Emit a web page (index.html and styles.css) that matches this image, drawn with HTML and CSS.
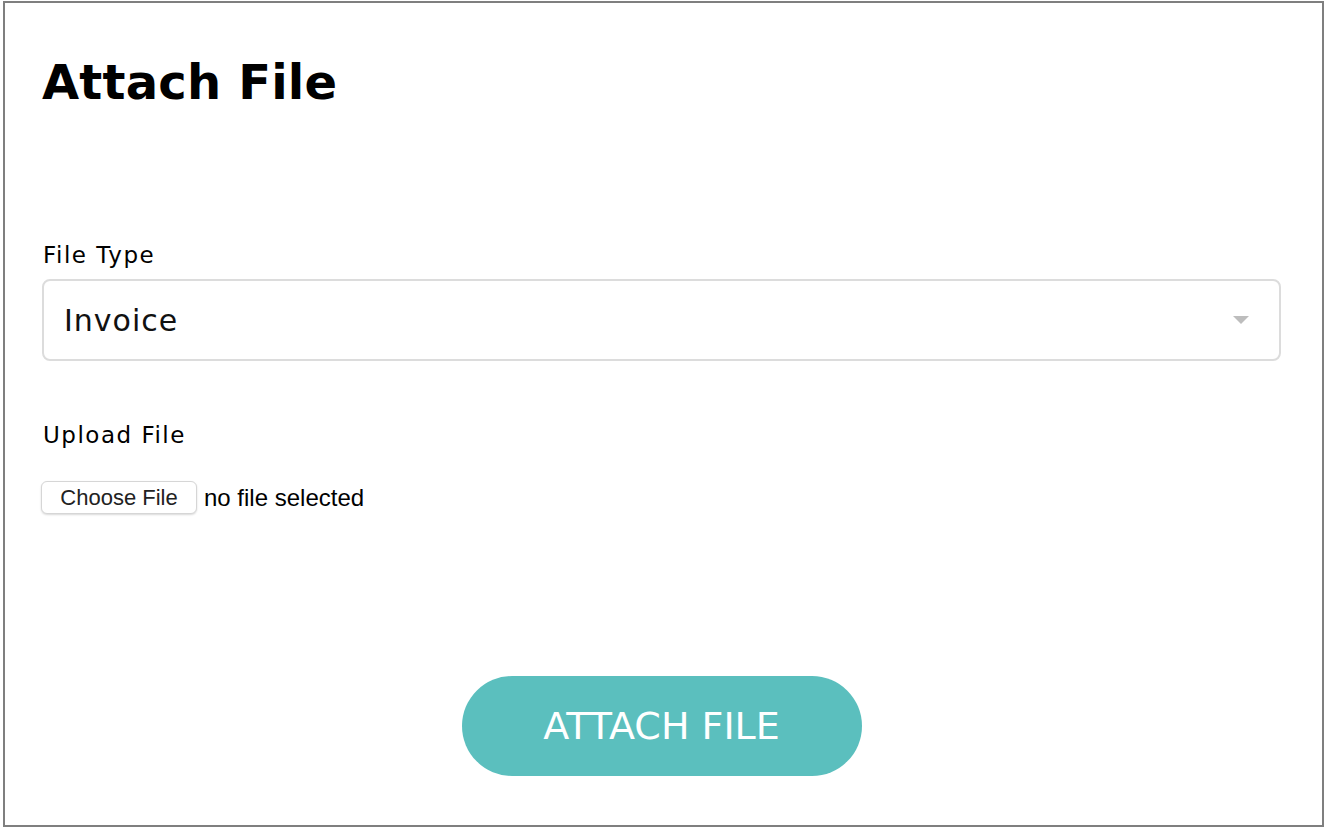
FILE: index.html
```html
<!DOCTYPE html>
<html lang="en">
<head>
<meta charset="utf-8">
<title>Attach File</title>
<link rel="stylesheet" href="styles.css">
</head>
<body>
<div class="frame">
  <h1 class="title">Attach File</h1>
  <form class="form">
    <label class="label" for="ftype">File Type</label>
    <div class="select">
      <span class="select-value">Invoice</span>
      <svg class="caret" width="16" height="8" viewBox="0 0 16 8"><path d="M0 0h16L8 8z" fill="#bdbdbd"/></svg>
    </div>
    <label class="label upload-label">Upload File</label>
    <div class="file-row">
      <span class="file-btn">Choose File</span>
      <span class="file-status">no file selected</span>
    </div>
    <div class="actions">
      <button type="button" class="attach-btn">ATTACH FILE</button>
    </div>
  </form>
</div>
</body>
</html>
```

FILE: styles.css
```css
html, body {
  margin: 0;
  padding: 0;
  background: #fff;
}
body {
  font-family: "DejaVu Sans", "Noto Sans", sans-serif;
  color: #000;
}
.frame {
  box-sizing: border-box;
  margin: 1px 2px 0 3px;
  height: 826px;
  border: 2px solid #7f7f7f;
  padding: 0 41px 0 37px;
}
.title {
  margin: 0;
  padding-top: 49px;
  font-size: 48px;
  line-height: 60px;
  font-weight: 700;
  letter-spacing: 0.2px;
}
.form {
  display: flex;
  flex-direction: column;
}
.label {
  display: block;
  font-size: 23px;
  line-height: 30px;
  letter-spacing: 1.5px;
  margin-top: 128px;
  margin-left: 1px;
  color: #000;
}
.upload-label {
  margin-top: 59px;
}
.select {
  box-sizing: border-box;
  margin-top: 9px;
  height: 82px;
  border: 2px solid #dcdcdc;
  border-radius: 8px;
  display: flex;
  align-items: center;
  justify-content: space-between;
  padding: 0 30px 0 20px;
}
.select-value {
  font-size: 30px;
  letter-spacing: 1px;
  color: #111;
}
.caret {
  display: block;
}
.file-row {
  margin-top: 31px;
  display: flex;
  align-items: center;
  gap: 7px;
  font-family: "Liberation Sans", Arial, sans-serif;
}
.file-btn {
  box-sizing: border-box;
  height: 33px;
  width: 156px;
  margin-left: -1px;
  display: flex;
  align-items: center;
  justify-content: center;
  border: 1px solid #d6d6d6;
  border-radius: 6px;
  box-shadow: 0 1px 2px rgba(0,0,0,0.15);
  color: #222;
  background: #fff;
  font-size: 22px;
}
.file-status {
  color: #000;
  font-size: 24px;
}
.actions {
  display: flex;
  justify-content: center;
  margin-top: 162px;
}
.attach-btn {
  width: 400px;
  height: 100px;
  border: none;
  border-radius: 50px;
  background: #5bbfbe;
  color: #fff;
  font-family: "DejaVu Sans", sans-serif;
  font-size: 38px;
  letter-spacing: 0;
  cursor: pointer;
}
```
